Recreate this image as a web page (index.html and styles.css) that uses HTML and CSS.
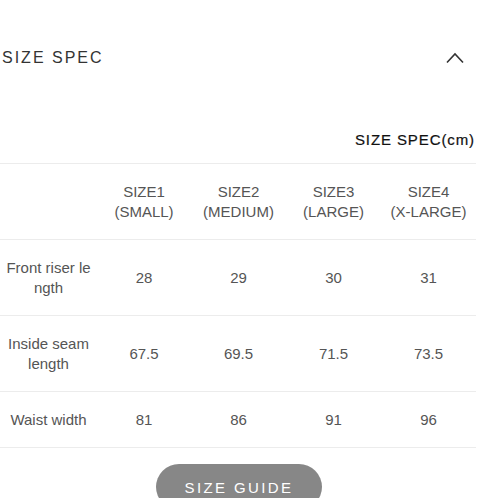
FILE: index.html
```html
<!DOCTYPE html>
<html lang="en">
<head>
<meta charset="utf-8">
<title>Size Spec</title>
<link rel="stylesheet" href="styles.css">
</head>
<body>
<div class="page">
  <div class="section-head">
    <span class="section-title">SIZE SPEC</span>
    <svg class="chevron" width="18" height="12" viewBox="0 0 18 12" aria-hidden="true">
      <polyline points="1,10.5 9,2 17,10.5" fill="none" stroke="#333" stroke-width="1.6"/>
    </svg>
  </div>
  <div class="unit">SIZE SPEC(cm)</div>
  <table class="spec">
    <colgroup>
      <col class="c-label"><col class="c-1"><col class="c-2"><col class="c-3"><col class="c-4">
    </colgroup>
    <tr>
      <td></td>
      <td>SIZE1<br>(SMALL)</td>
      <td>SIZE2<br>(MEDIUM)</td>
      <td>SIZE3<br>(LARGE)</td>
      <td>SIZE4<br>(X-LARGE)</td>
    </tr>
    <tr>
      <td>Front riser le<br>ngth</td>
      <td>28</td><td>29</td><td>30</td><td>31</td>
    </tr>
    <tr>
      <td>Inside seam<br>length</td>
      <td>67.5</td><td>69.5</td><td>71.5</td><td>73.5</td>
    </tr>
    <tr>
      <td>Waist width</td>
      <td>81</td><td>86</td><td>91</td><td>96</td>
    </tr>
  </table>
  <div class="actions">
    <button class="guide-btn">SIZE GUIDE</button>
  </div>
</div>
</body>
</html>
```
FILE: styles.css
```css
html, body {
  margin: 0;
  padding: 0;
  background: #ffffff;
}
body {
  font-family: "Liberation Sans", Arial, sans-serif;
  color: #444;
  overflow: hidden;
}
.page {
  width: 476px;
  padding-top: 46px;
}
.section-head {
  display: flex;
  align-items: center;
  justify-content: space-between;
  height: 24px;
  padding-left: 2px;
  padding-right: 12px;
}
.section-title {
  font-size: 16px;
  letter-spacing: 2px;
  color: #333;
}
.chevron {
  display: block;
}
.unit {
  margin-top: 60px;
  text-align: right;
  font-size: 15px;
  line-height: 20px;
  color: #111;
  letter-spacing: 0.9px;
  padding-right: 1px;
  -webkit-text-stroke: 0.2px #111;
}
.spec {
  margin-top: 13px;
  width: 476px;
  border-collapse: separate;
  border-spacing: 0;
  border-top: 1px solid #ececec;
  table-layout: fixed;
  font-size: 15px;
  line-height: 20px;
  color: #555;
}
.c-label { width: 97px; }
.c-1 { width: 94px; }
.c-2 { width: 95px; }
.c-3 { width: 95px; }
.c-4 { width: 95px; }
.spec td {
  padding: 18px 0 17px;
  border-bottom: 1px solid #ececec;
  text-align: center;
  vertical-align: middle;
}
.actions {
  display: flex;
  justify-content: center;
  padding-top: 16px;
  padding-left: 2px;
}
.guide-btn {
  width: 166px;
  height: 46px;
  border: none;
  border-radius: 23px;
  background: #878787;
  color: #ffffff;
  font-family: "Liberation Sans", Arial, sans-serif;
  font-size: 15px;
  letter-spacing: 2.4px;
  padding: 0;
}
```
